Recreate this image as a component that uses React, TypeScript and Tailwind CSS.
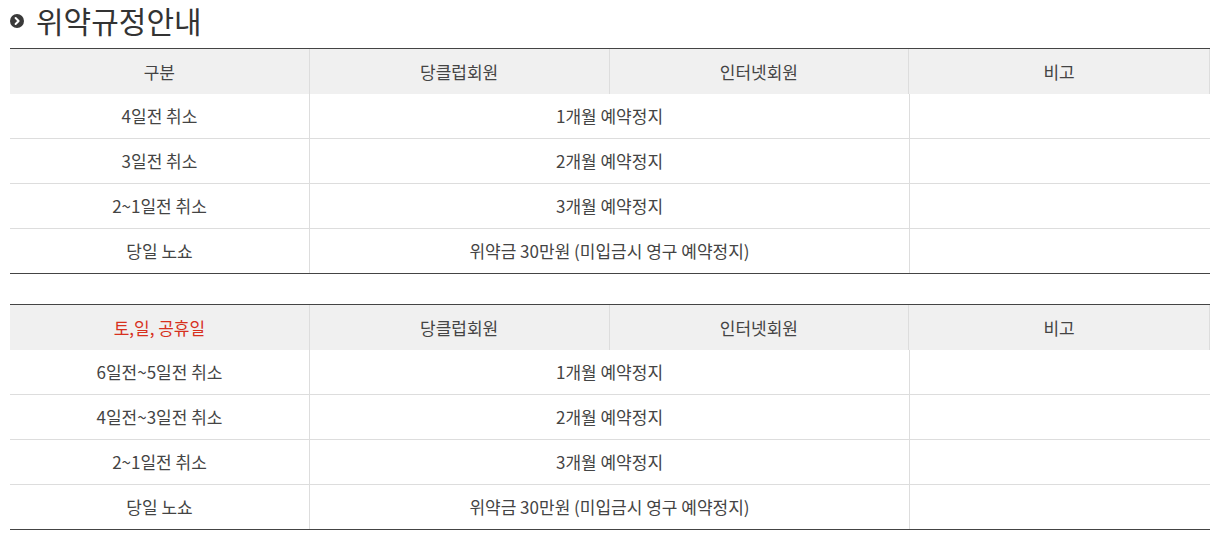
import React from 'react'

const font = { fontFamily: '"Noto Sans CJK KR", "Noto Sans", sans-serif' }

type Row = { label: string; value: string }

const weekday: Row[] = [
  { label: '4일전 취소', value: '1개월 예약정지' },
  { label: '3일전 취소', value: '2개월 예약정지' },
  { label: '2~1일전 취소', value: '3개월 예약정지' },
  { label: '당일 노쇼', value: '위약금 30만원 (미입금시 영구 예약정지)' },
]

const weekend: Row[] = [
  { label: '6일전~5일전 취소', value: '1개월 예약정지' },
  { label: '4일전~3일전 취소', value: '2개월 예약정지' },
  { label: '2~1일전 취소', value: '3개월 예약정지' },
  { label: '당일 노쇼', value: '위약금 30만원 (미입금시 영구 예약정지)' },
]

function RuleTable({ title, red, rows }: { title: string; red?: boolean; rows: Row[] }) {
  return (
    <div className="w-[1200px] border-t border-b border-[#444] text-[17px] text-[#444]">
      <div className="grid grid-cols-4 h-[45px] bg-[#f0f0f0] border-r border-[#ddd]">
        <div className={`flex items-center justify-center border-r border-[#ddd] ${red ? 'text-[#d7301e]' : ''}`}>{title}</div>
        <div className="flex items-center justify-center border-r border-[#ddd]">당클럽회원</div>
        <div className="flex items-center justify-center border-r border-[#ddd]">인터넷회원</div>
        <div className="flex items-center justify-center">비고</div>
      </div>
      {rows.map((r, i) => (
        <div
          key={i}
          className={`grid grid-cols-4 ${i < rows.length - 1 ? 'h-[45px] border-b border-[#ddd]' : 'h-[44px]'}`}
        >
          <div className="flex items-center justify-center border-r border-[#ddd]">{r.label}</div>
          <div className="col-span-2 flex items-center justify-center border-r border-[#ddd]">{r.value}</div>
          <div />
        </div>
      ))}
    </div>
  )
}

export default function App() {
  return (
    <div className="bg-white w-[1230px] h-[549px] px-[10px]" style={font}>
      <div className="flex items-center h-[48px] pb-[8px]">
        <svg width="14" height="14" viewBox="0 0 14 14" className="mr-[12px] mt-[1px]">
          <circle cx="7" cy="7" r="7" fill="#3a3a3a" />
          <path d="M5.6 4 L8.6 7 L5.6 10" stroke="#fff" strokeWidth="2" fill="none" strokeLinecap="round" strokeLinejoin="round" />
        </svg>
        <h2 className="text-[30px] leading-none text-[#333]">위약규정안내</h2>
      </div>
      <RuleTable title="구분" rows={weekday} />
      <div className="h-[30px]" />
      <RuleTable title="토,일, 공휴일" red rows={weekend} />
    </div>
  )
}
